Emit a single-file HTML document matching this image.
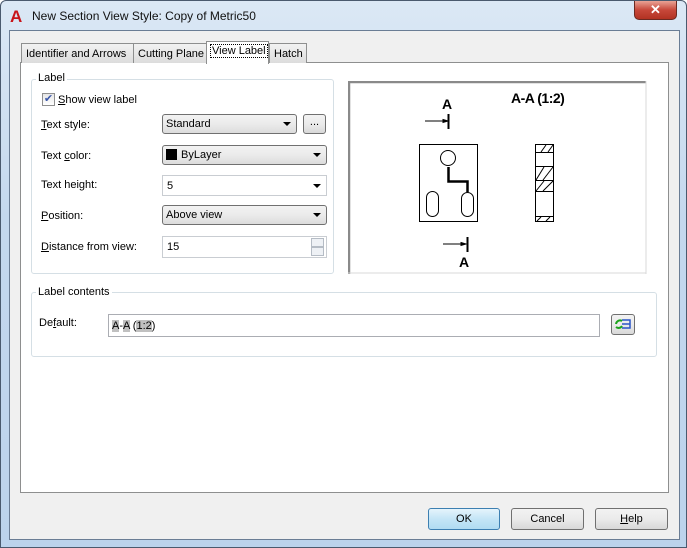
<!DOCTYPE html>
<html><head><style>
*{box-sizing:border-box;margin:0;padding:0}
body{width:687px;height:548px;overflow:hidden;font-family:"Liberation Sans",sans-serif;font-size:11px;color:#000;background:#fff}
.win{position:absolute;left:0;top:0;width:687px;height:548px;background:linear-gradient(#dbe8f5,#c4d8ee 40%,#bcd3ec);border:1px solid #4a5a6e;border-radius:6px 6px 0 0}
.title{position:absolute;left:31px;top:8px;font-size:12px;color:#111}
.logo{position:absolute;left:9px;top:6px;font:bold 17px "Liberation Sans";color:#c8141a}
.close{position:absolute;left:633px;top:0;width:43px;height:19px;background:linear-gradient(#e9a395,#c7483a 50%,#b23222);border:1px solid #6b2a22;border-top:none;border-radius:0 0 5px 5px;color:#fff;font:bold 13px "Liberation Sans";text-align:center;line-height:18px}
.client{position:absolute;left:8px;top:29px;width:671px;height:510px;background:#f0f0f0;border:1px solid #6a7d95}
.abs{position:absolute}
.panel{position:absolute;left:19px;top:61px;width:649px;height:431px;background:#fff;border:1px solid #8e8f8f}
.tab{position:absolute;top:42px;height:20px;border:1px solid #8e8f8f;border-bottom:none;background:linear-gradient(#f2f2f2,#dcdcdc);padding:4px 0 0 4px;white-space:nowrap;overflow:hidden}
.grp{position:absolute;border:1px solid #d5dfe5;border-radius:3px}
.gl{position:absolute;background:#fff;padding:0 2px;}
.lab{position:absolute}
.dd{position:absolute;height:20px;border:1px solid #707070;border-radius:3px;background:linear-gradient(#f2f2f2,#ebebeb 50%,#dcdcdc);padding:3px 3px 0}
.tb{position:absolute;height:21px;border:1px solid #c9cdd2;background:#fff;padding:4px 4px 0}
.arr{position:absolute;right:5px;top:7px;width:0;height:0;border-left:4px solid transparent;border-right:4px solid transparent;border-top:4px solid #000}
.btn{position:absolute;height:22px;border:1px solid #707070;border-radius:3px;background:linear-gradient(#f2f2f2,#ebebeb 50%,#d8d8d8);text-align:center;line-height:20px}
u{text-decoration:underline}
</style></head><body>
<div class="win">
<div class="logo">A</div>
<div class="title">New Section View Style: Copy of Metric50</div>
<div class="close">✕</div>
<div class="client"></div>
<div class="panel"></div>
<div class="tab" style="left:20px;width:113px">Identifier and Arrows</div>
<div class="tab" style="left:132px;width:74px">Cutting Plane</div>
<div class="tab" style="left:268px;width:38px">Hatch</div>
<div class="tab" style="left:205px;top:40px;height:23px;width:63px;background:#fff;padding:3px 0 0 3px"><span style="border:1px dotted #000;padding:0 1px">View Label</span></div>

<div class="grp" style="left:30px;top:78px;width:303px;height:195px"></div>
<div class="gl" style="left:35px;top:71px">Label</div>
<div class="abs" style="left:41px;top:92px;width:13px;height:13px;border:1px solid #8f8f8f;background:linear-gradient(#e6e6e6,#fff);font-size:11px;line-height:11px;text-align:center;color:#3a56a8">✔</div>
<div class="lab" style="left:57px;top:93px"><u>S</u>how view label</div>
<div class="lab" style="left:40px;top:118px"><u>T</u>ext style:</div>
<div class="dd" style="left:161px;top:113px;width:135px">Standard<div class="arr"></div></div>
<div class="btn" style="left:302px;top:113px;width:23px;height:20px;line-height:15px">...</div>
<div class="lab" style="left:40px;top:149px">Text <u>c</u>olor:</div>
<div class="dd" style="left:161px;top:144px;width:165px"><span style="display:inline-block;width:11px;height:11px;background:#000;vertical-align:-2px;margin-right:4px"></span>ByLayer<div class="arr"></div></div>
<div class="lab" style="left:40px;top:178px">Text hei<u>g</u>ht:</div>
<div class="tb" style="left:161px;top:174px;width:165px">5<div class="arr" style="top:8px"></div></div>
<div class="lab" style="left:40px;top:209px"><u>P</u>osition:</div>
<div class="dd" style="left:161px;top:204px;width:165px">Above view<div class="arr"></div></div>
<div class="lab" style="left:40px;top:240px"><u>D</u>istance from view:</div>
<div class="tb" style="left:161px;top:235px;width:165px;height:22px">15
<div class="abs" style="left:148px;top:1px;width:13px;height:9px;border:1px solid #b5bcc5;background:#eef1f5"></div>
<div class="abs" style="left:148px;top:10px;width:13px;height:9px;border:1px solid #b5bcc5;background:#eef1f5"></div></div>

<svg class="abs" style="left:347px;top:80px" width="299" height="194" viewBox="347 80 299 194">
<rect x="347" y="80" width="298" height="193" fill="#fff"/>
<path d="M348 80V273 M347 81H645" stroke="#8a8a8a" stroke-width="2.5"/>
<path d="M645 80V273 M347 272H645" stroke="#d8d8d8" stroke-width="1"/>
<g font-family="Liberation Sans" font-weight="bold" fill="#000">
<text x="510" y="102" font-size="14" letter-spacing="-0.5">A-A (1:2)</text>
<text x="441" y="108" font-size="14">A</text>
<text x="458" y="266" font-size="14">A</text></g>
<g stroke="#000" fill="none" stroke-width="1">
<path d="M424 120H442 M442 118.5L447 120L442 121.5Z" fill="#000"/>
<path d="M447.5 113V128" stroke-width="2"/>
<path d="M442 243H460 M460 241.5L465 243L460 244.5Z" fill="#000"/>
<path d="M466.5 236V251" stroke-width="2"/>
<rect x="418.5" y="143.5" width="58" height="77"/>
<circle cx="447" cy="157" r="7.5"/>
<path d="M447.5 166V180.5H466.5V191" stroke-width="2.5"/>
<rect x="425.5" y="190.5" width="12" height="25" rx="6"/>
<rect x="460.5" y="191.5" width="12" height="24" rx="6"/>
<rect x="534.5" y="143.5" width="18" height="77"/>
<path d="M534 151.5H553 M534 165.5H553 M534 179.5H553 M534 190.5H553 M534 215.5H553"/>
<path d="M540 151L545 144 M547 151L552 144 M535 179L543 166 M542 179L552 166 M535 190L543 180 M542 190L552 180 M536 220L540 216 M545 220L549 216"/>
</g></svg>

<div class="grp" style="left:30px;top:291px;width:626px;height:65px"></div>
<div class="gl" style="left:35px;top:285px">Label contents</div>
<div class="lab" style="left:38px;top:316px">De<u>f</u>ault:</div>
<div class="abs" style="left:107px;top:313px;width:492px;height:23px;border:1px solid #abadb3;padding:5px 3px;background:#fff"><span style="background:#c0c0c0">A</span>-<span style="background:#c0c0c0">A</span> (<span style="background:#c0c0c0">1:2</span>)</div>
<div class="btn" style="left:610px;top:313px;width:24px;height:21px">
<svg width="20" height="18" viewBox="0 0 20 18" style="margin-top:1px"><path d="M9 4H17V8H9 M9 8H17V12H9" fill="none" stroke="#2a55c8" stroke-width="1.5"/><path d="M3 8A4 4 0 0 1 9 5 M9 10A4 4 0 0 1 3 11" fill="none" stroke="#1aa31a" stroke-width="2"/></svg></div>

<div class="btn" style="left:427px;top:507px;width:72px;border-color:#3c7fb1;background:linear-gradient(#e5f4fc,#c4e5f6 50%,#b0dcf2)">OK</div>
<div class="btn" style="left:510px;top:507px;width:73px">Cancel</div>
<div class="btn" style="left:594px;top:507px;width:73px"><u>H</u>elp</div>
</div>
</body></html>
